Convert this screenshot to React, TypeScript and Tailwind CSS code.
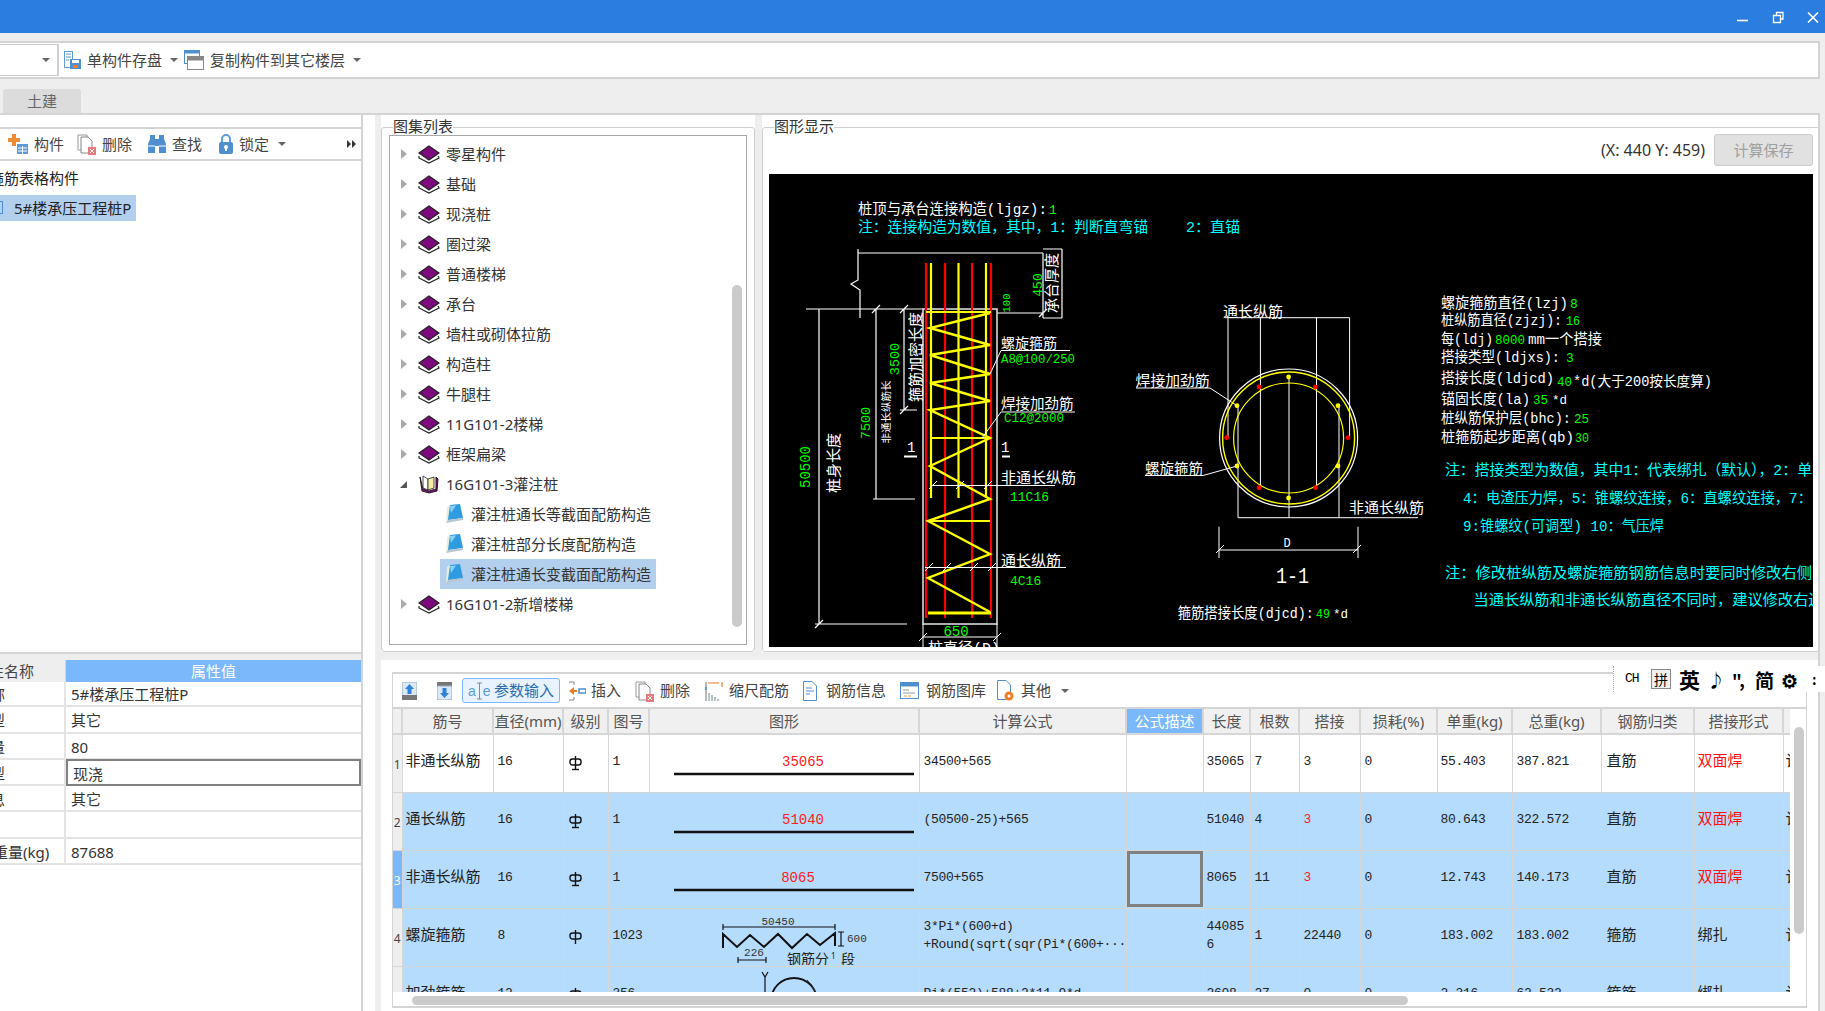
import React from 'react'

const treeItems = [
  { name: '零星构件' },
  { name: '基础' },
  { name: '现浇桩' },
  { name: '圈过梁' },
  { name: '普通楼梯' },
  { name: '承台' },
  { name: '墙柱或砌体拉筋' },
  { name: '构造柱' },
  { name: '牛腿柱' },
  { name: '11G101-2楼梯' },
  { name: '框架扁梁' },
]

const tableCols = [9, 91, 70, 45, 41, 270, 207, 77, 47, 49, 61, 77, 75, 89, 93, 89, 60]

const headers = ['', '筋号', '直径(mm)', '级别', '图号', '图形', '计算公式', '公式描述', '长度', '根数', '搭接', '损耗(%)', '单重(kg)', '总重(kg)', '钢筋归类', '搭接形式', '']

const rows = [
  { no: '1', name: '非通长纵筋', dia: '16', grade: 'b', fig: '1', len: '35065', formula: ['34500+565'], length: '35065', count: '7', lap: '3', lapRed: false, loss: '0', unit: '55.403', total: '387.821', kind: '直筋', form: '双面焊', formRed: true, blue: false },
  { no: '2', name: '通长纵筋', dia: '16', grade: 'b', fig: '1', len: '51040', formula: ['(50500-25)+565'], length: '51040', count: '4', lap: '3', lapRed: true, loss: '0', unit: '80.643', total: '322.572', kind: '直筋', form: '双面焊', formRed: true, blue: true },
  { no: '3', name: '非通长纵筋', dia: '16', grade: 'b', fig: '1', len: '8065', formula: ['7500+565'], length: '8065', count: '11', lap: '3', lapRed: true, loss: '0', unit: '12.743', total: '140.173', kind: '直筋', form: '双面焊', formRed: true, blue: true },
  { no: '4', name: '螺旋箍筋', dia: '8', grade: 'a', fig: '1023', len: '', formula: ['3*Pi*(600+d)', '+Round(sqrt(sqr(Pi*(600+···'], length: '440856', count: '1', lap: '22440', lapRed: false, loss: '0', unit: '183.002', total: '183.002', kind: '箍筋', form: '绑扎', formRed: false, blue: true },
  { no: '5', name: '加劲箍筋', dia: '12', grade: 'b', fig: '356', len: '', formula: ['Pi*(552)+588+2*11.9*d'], length: '2608', count: '27', lap: '0', lapRed: false, loss: '0', unit: '2.316', total: '62.532', kind: '箍筋', form: '绑扎', formRed: false, blue: true },
]

const props = [
  { label: '构件名称', value: '5#楼承压工程桩P', ml: '-ml-[55px]' },
  { label: '构件类型', value: '其它', ml: '-ml-[55px]' },
  { label: '构件数量', value: '80', ml: '-ml-[55px]' },
  { label: '预制类型', value: '现浇', ml: '-ml-[55px]', active: true },
  { label: '汇总信息', value: '其它', ml: '-ml-[55px]' },
  { label: '', value: '', ml: '' },
  { label: '钢筋总重量(kg)', value: '87688', ml: '-ml-[52px]' },
]

function Caret({ className }: { className?: string }) {
  return <span className={`block w-0 h-0 border-x-[4px] border-x-transparent border-t-[4px] border-t-[#666] ${className ?? ''}`} />
}

function BookIcon() {
  return (
    <svg width="22" height="20" viewBox="0 0 22 20" className="shrink-0">
      <path d="M1 12 L1 14 L11 19 L21 14 L20 12" fill="#fff" stroke="#222" strokeWidth="1.2" />
      <path d="M1 9 L11 2 L21 9 L11 16 Z" fill="#7d0a7d" stroke="#222" strokeWidth="1.2" />
    </svg>
  )
}

function OpenBookIcon() {
  return (
    <svg width="22" height="20" viewBox="0 0 22 20" className="shrink-0">
      <path d="M2 3 L4 17 L11 19 L19 17 L20 5 L18 3 L18 15 L11 17 L5 15 Z" fill="#7d0a7d" stroke="#222" strokeWidth="1" />
      <path d="M5 2 L10 5 L10 16 L5 14 Z" fill="#fff" stroke="#222" strokeWidth="0.8" />
      <path d="M10 5 L16 3 L16 14 L10 16 Z" fill="#f6eea0" stroke="#222" strokeWidth="0.8" />
    </svg>
  )
}

function SheetIcon() {
  return (
    <svg width="18" height="20" viewBox="0 0 18 20" className="shrink-0">
      <path d="M0 19 L1 3 L4 1 L4 16 Z" fill="#e4efdc" />
      <path d="M2 16 L4 1 L14 0 L17 14 Z" fill="#2f9be0" />
      <path d="M4 2 L10 1.5 L5 9 Z" fill="#8fd0f4" />
      <path d="M0 19 L2 16 L17 14 L17 16 Z" fill="#b8c6cf" />
    </svg>
  )
}

function GradeIcon({ kind }: { kind: string }) {
  return (
    <svg width="13" height="15" viewBox="0 0 13 15">
      <rect x="1" y="3" width="11" height="6" rx="2.5" fill="none" stroke="#111" strokeWidth="1.4" />
      <path d="M6.5 0 V14" stroke="#111" strokeWidth="1.4" />
      {kind === 'b' && <path d="M3 13.5 H10" stroke="#111" strokeWidth="1.4" />}
    </svg>
  )
}

function DocDeleteIcon() {
  return (
    <svg width="20" height="22" viewBox="0 0 20 22" className="shrink-0">
      <path d="M1 2 H10 V17 H1 Z" fill="#fff" stroke="#999" />
      <path d="M4 4 H11 L15 8 V20 H4 Z" fill="#fff" stroke="#888" />
      <rect x="11" y="14" width="8" height="8" fill="#e9797a" />
      <path d="M13 16 L17 20 M17 16 L13 20" stroke="#fff" strokeWidth="1" />
    </svg>
  )
}

function TopSaveIcon() {
  return (
    <svg width="17" height="18" viewBox="0 0 17 18" className="shrink-0">
      <rect x="0.5" y="0.5" width="8" height="16" fill="#fff" stroke="#5d9bd8" />
      <path d="M2 3 H7 M2 6 H7 M2 9 H5" stroke="#5d9bd8" />
      <rect x="6" y="8" width="11" height="10" fill="#4f8fd0" />
      <rect x="8" y="9" width="7" height="3" fill="#fff" />
      <rect x="9" y="14" width="5" height="3" fill="#ef7d22" />
    </svg>
  )
}

function TopCopyIcon() {
  return (
    <svg width="20" height="20" viewBox="0 0 20 20" className="shrink-0">
      <rect x="0.5" y="0.5" width="15" height="13" fill="#fff" stroke="#4f8fd0" />
      <rect x="0.5" y="0.5" width="15" height="3" fill="#4f8fd0" />
      <rect x="3.5" y="6.5" width="16" height="13" fill="#fff" stroke="#888" />
      <rect x="3.5" y="6.5" width="16" height="4" fill="#888" />
    </svg>
  )
}

function ToolbarTop() {
  return (
    <div className="flex items-center h-[38px] mt-[8px] mr-[5px] bg-white border-y-2 border-r-2 border-[#d4d4d4] text-[15px] text-[#444]">
      <div className="w-[59px] h-[32px] flex items-center justify-end pr-[7px] border-r-2 border-y border-[#cfcfcf]">
        <Caret />
      </div>
      <div className="ml-[5px]"><TopSaveIcon /></div>
      <span className="ml-[6px]">单构件存盘</span>
      <Caret className="ml-[8px]" />
      <div className="ml-[6px]"><TopCopyIcon /></div>
      <span className="ml-[6px]">复制构件到其它楼层</span>
      <Caret className="ml-[8px]" />
    </div>
  )
}

function LeftPanel() {
  return (
    <div className="w-[363px] h-full shrink-0 border-r-2 border-[#d4d4d4] flex flex-col pt-[12px]">
      <div className="h-[34px] shrink-0 flex items-center border-y-2 border-[#d4d4d4] text-[15px] text-[#444] relative">
        <svg width="20" height="22" viewBox="0 0 20 22" className="ml-[8px] shrink-0">
          <path d="M4 1 H8 V5 H12 V9 H8 V13 H4 V9 H0 V5 H4 Z" fill="#ef8a35" />
          <rect x="9" y="11" width="11" height="10" fill="#5d9bd8" />
          <path d="M10 15 H19 M10 18 H19 M14.5 13 V21" stroke="#fff" />
        </svg>
        <span className="ml-[6px]">构件</span>
        <div className="ml-[13px]"><DocDeleteIcon /></div>
        <span className="ml-[5px]">删除</span>
        <svg width="20" height="20" viewBox="0 0 20 20" className="ml-[15px] shrink-0">
          <path d="M3 1 H8 V5 H12 V1 H17 V5 L19 10 V19 H12 V12 H8 V19 H1 V10 L3 5 Z" fill="#4f8fd0" />
          <path d="M1 12 H8 M12 12 H19" stroke="#fff" />
        </svg>
        <span className="ml-[5px]">查找</span>
        <svg width="16" height="20" viewBox="0 0 16 20" className="ml-[16px] shrink-0">
          <path d="M4 8 V5 A4 4 0 0 1 12 5 V8" fill="none" stroke="#5d9bd8" strokeWidth="2" />
          <rect x="1" y="8" width="14" height="12" rx="2" fill="#4f8fd0" />
          <circle cx="8" cy="13" r="2" fill="#fff" />
          <rect x="7" y="13" width="2" height="4" fill="#fff" />
        </svg>
        <span className="ml-[5px]">锁定</span>
        <Caret className="ml-[9px]" />
        <svg width="10" height="8" viewBox="0 0 10 8" className="absolute right-[4px] top-[11px]">
          <path d="M0 0 L4 4 L0 8 Z M5 0 L9 4 L5 8 Z" fill="#333" />
        </svg>
      </div>
      <div className="h-[491px] shrink-0 text-[15px] text-[#222] overflow-hidden">
        <div className="h-[34px] flex items-center -ml-[11px] whitespace-nowrap">箍筋表格构件</div>
        <div className="w-[136px] h-[26px] bg-[#b3cfee] flex items-center pl-[14px] whitespace-nowrap relative">
          <span className="absolute left-0 top-[6px] w-[3px] h-[13px] border-y border-r border-[#4f8fd0]" />
          5#楼承压工程桩P
        </div>
      </div>
      <div className="h-[8px] shrink-0 bg-[#eeeeee] border-t-2 border-[#d4d4d4]" />
      <div className="text-[15px] text-[#333]">
        <div className="grid grid-cols-[66px_1fr] h-[21px] border-b border-[#cfcfcf]">
          <div className="bg-[#eeeeee] overflow-hidden whitespace-nowrap text-[#444] leading-[22px] border-r border-[#d4d4d4]">
            <span className="block -ml-[26px]">属性名称</span>
          </div>
          <div className="bg-[#7ab8fb] text-white text-center leading-[22px]">属性值</div>
        </div>
        {props.map((p, i) => (
          <div key={i} className="grid grid-cols-[66px_1fr] h-[26.3px] border-b-2 border-[#e4e4e4]">
            <div className="overflow-hidden whitespace-nowrap leading-[26px] border-r-2 border-[#e4e4e4]">
              <span className={`block ${p.ml}`}>{p.label}</span>
            </div>
            <div className={`pl-[5px] leading-[26px] ${p.active ? 'border-2 border-[#808080] -mt-[1px] h-[27px] pl-[3px]' : ''}`}>{p.value}</div>
          </div>
        ))}
      </div>
    </div>
  )
}

function TreePanel() {
  return (
    <div className="w-[374px] shrink-0 mt-[12px] h-[525px] relative border border-[#cfcfcf] rounded-[3px] pt-[7px] px-[7px] pb-[6px]">
      <span className="absolute left-[11px] -top-[11px] bg-white text-[15px] leading-[18px] text-[#333]">图集列表</span>
      <div className="h-full border border-[#a8a8a8] relative pt-[3px] text-[15px] text-[#333] overflow-hidden">
        {treeItems.map(item => (
          <div key={item.name} className="h-[30px] flex items-center pl-[11px]">
            <span className="block w-0 h-0 border-y-[5px] border-y-transparent border-l-[6px] border-l-[#aaa] mr-[11px]" />
            <BookIcon />
            <span className="ml-[6px]">{item.name}</span>
          </div>
        ))}
        <div className="h-[30px] flex items-center pl-[10px]">
          <span className="block w-0 h-0 border-b-[7px] border-b-[#555] border-l-[7px] border-l-transparent mr-[11px]" />
          <OpenBookIcon />
          <span className="ml-[6px]">16G101-3灌注桩</span>
        </div>
        <div className="h-[30px] flex items-center pl-[56px]">
          <SheetIcon />
          <span className="ml-[7px]">灌注桩通长等截面配筋构造</span>
        </div>
        <div className="h-[30px] flex items-center pl-[56px]">
          <SheetIcon />
          <span className="ml-[7px]">灌注桩部分长度配筋构造</span>
        </div>
        <div className="h-[30px] flex items-center ml-[50px] pl-[6px] w-[216px] bg-[#b3cfee]">
          <SheetIcon />
          <span className="ml-[7px]">灌注桩通长变截面配筋构造</span>
        </div>
        <div className="h-[30px] flex items-center pl-[11px]">
          <span className="block w-0 h-0 border-y-[5px] border-y-transparent border-l-[6px] border-l-[#aaa] mr-[11px]" />
          <BookIcon />
          <span className="ml-[6px]">16G101-2新增楼梯</span>
        </div>
        <div className="absolute right-[4px] top-[149px] w-[10px] h-[342px] rounded-[5px] bg-[#cbcbcb]" />
      </div>
    </div>
  )
}

const W = '#ffffff'
const G = '#00ff00'
const C = '#00ffff'
const Y = '#ffff00'
const R = '#ff0000'

function T({ x, y, c = W, s = 14.5, children, a, rot, len }: { x: number; y: number; c?: string; s?: number; children: React.ReactNode; a?: 'middle'; rot?: boolean; len?: number }) {
  return (
    <text x={x} y={y} fill={c} fontSize={s} textAnchor={a} textLength={len} lengthAdjust={len ? 'spacingAndGlyphs' : undefined} transform={rot ? `rotate(-90 ${x} ${y})` : undefined} fontFamily="'Liberation Mono','Noto Sans CJK SC',monospace">
      {children}
    </text>
  )
}

function CadDrawing() {
  const zig = '990,313 930,328 990,345 930,355 990,374 930,383 990,401 930,410 990,438 930,466 990,499 928,521 990,554 928,578 990,612'
  const tick = (x: number, y: number) => `M${x - 4} ${y + 4} L${x + 4} ${y - 4} `
  return (
    <svg viewBox="769 174 1044 473" className="block w-[1044px] h-[473px] bg-black">
      {/* elevation */}
      <T x={858} y={214} s={15} len={189}>桩顶与承台连接构造(ljgz):</T>
      <T x={1049} y={214} c={G} s={13}>1</T>
      <T x={858} y={232} c={C} s={15} len={290}>注：连接构造为数值，其中，1：判断直弯锚</T>
      <T x={1186} y={232} c={C} s={15} len={54}>2：直锚</T>

      <path d={`M858 249 V280 L851 284 L860 290 V318 M858 253 H1043 M806 309 H923 M997 313 H1043 M1062 249 V318 M1043 253 V318 M1043 249 H1062 M1043 318 H1062 M819 309 V624 M815 624 H907 M876 309 V499 M873 499 H915 M904 309 V410 M900 410 H917 ${tick(819, 624)}${tick(876, 309)}${tick(904, 309)}${tick(904, 410)}${tick(1043, 313)}`} fill="none" stroke={W} strokeWidth="1.2" />
      <rect x={923} y={309} width={74} height={315} fill="none" stroke="#e8e8e8" strokeWidth="1.5" />
      <path d="M926 263 V618 M945 263 V618 M972 263 V618 M991 263 V618" stroke={R} strokeWidth="2.2" />
      <path d="M931 263 V498 M958.5 263 V498 M986 263 V498" stroke={Y} strokeWidth="2.2" />
      <polyline points={zig} fill="none" stroke={Y} strokeWidth="2.4" />
      <path d="M926 312 H991 M930 438 H990 M928 521 H990" stroke={Y} strokeWidth="2.2" />
      <path d="M928 613 H991" stroke={Y} strokeWidth="3.2" />

      <T x={810} y={467} c={G} a="middle" rot s={14}>50500</T>
      <T x={839} y={463} a="middle" rot s={15}>桩身长度</T>
      <T x={870} y={423} c={G} a="middle" rot s={13.5}>7500</T>
      <T x={890} y={412} a="middle" rot s={10.5}>非通长纵筋长</T>
      <T x={899} y={359} c={G} a="middle" rot s={13.5}>3500</T>
      <T x={921} y={357} a="middle" rot s={15}>箍筋加密长度</T>
      <T x={1057} y={283} a="middle" rot s={15}>承台厚度</T>
      <T x={1042} y={285} c={G} a="middle" rot s={13}>450</T>
      <T x={1010} y={303} c={G} a="middle" rot s={10.5}>100</T>

      <T x={1001} y={348} s={14}>螺旋箍筋</T>
      <path d="M1001 350.5 H1070 L1001 350.5 L990 374" fill="none" stroke={W} />
      <T x={1001} y={363} c={G} s={13} len={74}>A8@100/250</T>
      <T x={1001} y={409} s={14.5}>焊接加劲筋</T>
      <path d="M1075 412 H1001 L982 438" fill="none" stroke={W} />
      <T x={1004} y={422} c={G} s={13} len={60}>C12@2000</T>
      <T x={1001} y={483} s={15}>非通长纵筋</T>
      <path d={`M931 485.5 H1055 ${tick(933, 485)}${tick(960, 485)}${tick(988, 485)}`} fill="none" stroke={W} />
      <T x={1010} y={501} c={G} s={13}>11C16</T>
      <T x={1001} y={566} s={15}>通长纵筋</T>
      <path d={`M925 567.5 H1066 ${tick(929, 567)}${tick(947, 567)}${tick(974, 567)}${tick(992, 567)}`} fill="none" stroke={W} />
      <T x={1010} y={585} c={G} s={13}>4C16</T>

      <T x={907} y={452} s={14}>1</T>
      <path d="M904 456.5 H917 M1002 456.5 H1010" stroke={W} strokeWidth="2" />
      <T x={1001} y={452} s={14}>1</T>

      <T x={956} y={636} c={G} a="middle" s={14}>650</T>
      <path d={`M923 637 H997 ${tick(923, 637)}${tick(997, 637)}M923 624 V647 M997 624 V647`} fill="none" stroke={W} />
      <T x={928} y={653} s={15}>桩直径(D)</T>

      {/* section 1-1 */}
      <path d="M1225 317.7 H1349.6 M1228 317.7 V437 M1260.4 317.7 V487 M1316.5 317.7 V487 M1349.6 317.7 V437 M1238 405 V517.7 M1289 377 V517.7 M1339 405 V517.7 M1238 517.7 H1418 M1136 388 H1210 L1236 405 M1145 475.5 H1203 L1237 466" fill="none" stroke={W} strokeWidth="1" />
      <circle cx={1288.6} cy={438} r={69} fill="none" stroke={W} strokeWidth="1.2" />
      <circle cx={1288.6} cy={438} r={66} fill="none" stroke={Y} strokeWidth="1.4" />
      <circle cx={1288.6} cy={438} r={55} fill="none" stroke={Y} strokeWidth="1.2" />
      {[[1288.6, 377], [1288.6, 498], [1237, 405.7], [1338, 405.7], [1237, 466], [1338, 466]].map(p => (
        <circle key={`${p[0]}-${p[1]}`} cx={p[0]} cy={p[1]} r={2.4} fill={Y} />
      ))}
      {[[1259, 387], [1315.4, 387], [1226.7, 437.7], [1348, 437.7], [1259, 487.7], [1315.4, 487.7]].map(p => (
        <circle key={`${p[0]}-${p[1]}`} cx={p[0]} cy={p[1]} r={2.4} fill={R} />
      ))}
      <T x={1223} y={316.7} s={15}>通长纵筋</T>
      <T x={1135.6} y={386} s={15} len={74}>焊接加劲筋</T>
      <T x={1145} y={474} s={14.5}>螺旋箍筋</T>
      <T x={1349} y={512.7} s={14.5} len={75}>非通长纵筋</T>
      <path d={`M1219 526.7 V558 M1358 526.7 V558 M1219 550 H1358 ${tick(1220, 549)}${tick(1357, 549)}`} fill="none" stroke={W} />
      <T x={1287} y={546.7} a="middle" s={12}>D</T>
      <T x={1276} y={583} s={22} len={33}>1-1</T>
      <T x={1177.7} y={618.3} s={14.5} len={136}>箍筋搭接长度(djcd):</T>
      <T x={1316} y={618.3} c={G} s={13} len={14}>49</T>
      <T x={1333} y={618.3} s={13} len={15}>*d</T>

      {/* params */}
      <T x={1441} y={307.7} s={14.5} len={127}>螺旋箍筋直径(lzj)</T>
      <T x={1570} y={307.7} c={G} s={13}>8</T>
      <T x={1441} y={325.3} s={14.5} len={121}>桩纵筋直径(zjzj):</T>
      <T x={1566} y={325.3} c={G} s={13} len={14}>16</T>
      <T x={1441} y={344} s={14.5} len={52}>每(ldj)</T>
      <T x={1495} y={344} c={G} s={13} len={30}>8000</T>
      <T x={1528} y={344} s={14.5} len={74}>mm一个搭接</T>
      <T x={1441} y={361.7} s={14.5} len={119}>搭接类型(ldjxs):</T>
      <T x={1566} y={361.7} c={G} s={13}>3</T>
      <T x={1441} y={383} s={14.5} len={113}>搭接长度(ldjcd)</T>
      <T x={1557} y={385.7} c={G} s={13} len={15}>40</T>
      <T x={1573} y={385.7} s={14} len={139}>*d(大于200按长度算)</T>
      <T x={1441} y={404} s={14.5} len={89}>锚固长度(la)</T>
      <T x={1533} y={404} c={G} s={13} len={15}>35</T>
      <T x={1552} y={404} s={13} len={15}>*d</T>
      <T x={1441} y={423} s={14.5} len={130}>桩纵筋保护层(bhc):</T>
      <T x={1574} y={423} c={G} s={13} len={15}>25</T>
      <T x={1441} y={441.7} s={14.5} len={133}>桩箍筋起步距离(qb)</T>
      <T x={1575} y={441.7} c={G} s={13} len={14}>30</T>

      <T x={1445} y={475} c={C} s={15} len={367}>注：搭接类型为数值，其中1：代表绑扎（默认），2：单</T>
      <T x={1463} y={502.7} c={C} s={15} len={349}>4：电渣压力焊，5：锥螺纹连接，6：直螺纹连接，7：</T>
      <T x={1463} y={530.7} c={C} s={15} len={201}>9:锥螺纹(可调型) 10：气压焊</T>
      <T x={1445} y={578} c={C} s={15} len={367}>注：修改桩纵筋及螺旋箍筋钢筋信息时要同时修改右侧</T>
      <T x={1473.5} y={605} c={C} s={15} len={350}>当通长纵筋和非通长纵筋直径不同时，建议修改右边</T>
    </svg>
  )
}

function DrawingPanel() {
  return (
    <div className="w-[1058px] shrink-0 mt-[12px] h-[525px] relative border border-[#cfcfcf] rounded-[3px] px-[6px] pt-[6px]">
      <span className="absolute left-[11px] -top-[11px] bg-white text-[15px] leading-[18px] text-[#333]">图形显示</span>
      <div className="h-[32px] flex items-center justify-end gap-[9px] text-[16px] text-[#333]">
        <span>(X: 440 Y: 459)</span>
        <button className="w-[99px] h-[32px] bg-[#e1e1e1] border border-[#cccccc] rounded-[3px] text-[#a0a0a0] text-[15px]">计算保存</button>
      </div>
      <div className="mt-[8px]"><CadDrawing /></div>
    </div>
  )
}

function ToolbarBottom() {
  return (
    <div className="h-[35px] shrink-0 flex items-center border-b-2 border-[#d4d4d4] text-[15px] text-[#444]">
      <svg width="15" height="18" viewBox="0 0 15 18" className="ml-[9px] shrink-0">
        <rect width="15" height="14" fill="#dbe9f7" stroke="#9ab" />
        <rect y="13" width="15" height="5" fill="#777" />
        <path d="M7.5 2 L12 7 H9.5 V12 H5.5 V7 H3 Z" fill="#2f83d6" />
      </svg>
      <svg width="15" height="18" viewBox="0 0 15 18" className="ml-[20px] shrink-0">
        <rect width="15" height="5" fill="#777" />
        <rect y="4" width="15" height="14" fill="#dbe9f7" stroke="#9ab" />
        <path d="M7.5 16 L12 11 H9.5 V6 H5.5 V11 H3 Z" fill="#2f83d6" />
      </svg>
      <div className="ml-[10px] w-[98px] h-[25px] flex items-center bg-[#e8f3ff] border border-[#7ab8fb] rounded-[3px] pl-[5px] text-[#2b6cb0]">
        <span className="flex items-center w-[26px] shrink-0 text-[14px] leading-none text-[#5d9bd8] font-['Liberation_Sans',sans-serif]">
          a
          <svg width="7" height="18" viewBox="0 0 7 18" className="shrink-0">
            <path d="M1 1 H6 M3.5 1 V17 M1 17 H6" stroke="#8a8a8a" fill="none" />
          </svg>
          e
        </span>
        <span className="whitespace-nowrap">参数输入</span>
      </div>
      <svg width="18" height="20" viewBox="0 0 18 20" className="ml-[8px] shrink-0">
        <path d="M1 1 H6 V4 M1 19 H6 V16" fill="none" stroke="#888" />
        <path d="M1 10 L6 6 V14 Z M5 9 H9 V11 H5 Z" fill="#ef7d22" />
        <rect x="11" y="8" width="7" height="4" fill="none" stroke="#4f8fd0" strokeWidth="1.5" />
      </svg>
      <span className="ml-[5px]">插入</span>
      <div className="ml-[14px]"><DocDeleteIcon /></div>
      <span className="ml-[5px]">删除</span>
      <svg width="18" height="20" viewBox="0 0 18 20" className="ml-[15px] shrink-0">
        <path d="M1 1 V20" stroke="#888" strokeWidth="1.2" />
        <path d="M3 2 H14 M17 1 V6" stroke="#ef7d22" strokeWidth="1.2" />
        <path d="M4 12 V20 M7 14 V20 M10 16 V20 M13 18 V20" stroke="#9aa" strokeWidth="1.4" />
        <path d="M1 6 V9" stroke="#4f8fd0" strokeWidth="1.6" />
      </svg>
      <span className="ml-[6px]">缩尺配筋</span>
      <svg width="14" height="20" viewBox="0 0 14 20" className="ml-[14px] shrink-0">
        <path d="M0.5 0.5 H9 L13.5 5 V19.5 H0.5 Z" fill="#fff" stroke="#4f8fd0" />
        <path d="M3 7 H9 M3 10 H11 M3 13 H7" stroke="#4f8fd0" />
      </svg>
      <span className="ml-[9px]">钢筋信息</span>
      <svg width="19" height="17" viewBox="0 0 19 17" className="ml-[14px] shrink-0">
        <rect x="0.5" y="0.5" width="18" height="16" fill="#fff" stroke="#4f8fd0" />
        <rect x="0.5" y="0.5" width="18" height="4" fill="#4f8fd0" />
        <path d="M3 8 H9 M3 11 H15" stroke="#999" strokeWidth="1.2" />
        <path d="M4 14 H7 M8 14 H11" stroke="#ef9d42" strokeWidth="1.2" />
      </svg>
      <span className="ml-[7px]">钢筋图库</span>
      <svg width="18" height="22" viewBox="0 0 18 22" className="ml-[11px] shrink-0">
        <path d="M0.5 0.5 H9 L13.5 5 V19.5 H0.5 Z" fill="#fff" stroke="#4f8fd0" />
        <circle cx="12" cy="16" r="4.5" fill="#ef7d22" />
        <circle cx="12" cy="16" r="1.6" fill="#fff" />
      </svg>
      <span className="ml-[6px]">其他</span>
      <Caret className="ml-[10px]" />
    </div>
  )
}

function ShapeCell({ r }: { r: (typeof rows)[number] }) {
  if (r.len) {
    const cx = r.no === '3' ? 148 : 153
    return (
      <svg viewBox="0 0 270 56" className="block w-[270px] h-[56px]">
        <text x={cx} y={31} fill="#ff2020" fontSize="14" textAnchor="middle" fontFamily="'Liberation Mono',monospace">{r.len}</text>
        <path d="M24 39 H264" stroke="#111" strokeWidth="2.6" />
      </svg>
    )
  }
  if (r.no === '4') {
    return (
      <svg viewBox="0 0 270 56" className="block w-[270px] h-[56px]">
        <polyline points="73,39 73,25 87,38 100,26 114,38 128,25 142,39 157,25 170,36 185,24 185,37" fill="none" stroke="#111" strokeWidth="2" />
        <path d="M73 18 H185 M73 15 V21 M185 15 V21 M191 23 V37 M188 23 H194 M188 37 H194 M88 51 H116 M88 48 V54 M116 48 V54" stroke="#111" strokeWidth="1.2" fill="none" />
        <g fontFamily="'Liberation Mono',monospace" fontSize="11" fill="#333">
          <text x={128} y={16} textAnchor="middle">50450</text>
          <text x={197} y={33}>600</text>
          <text x={104} y={47} textAnchor="middle">226</text>
        </g>
        <text x={137} y={55} fontSize="14" fill="#222" fontFamily="'Noto Sans CJK SC',sans-serif">钢筋分</text>
        <text x={181} y={50} fontSize="8" fill="#222">1</text>
        <text x={191} y={55} fontSize="14" fill="#222" fontFamily="'Noto Sans CJK SC',sans-serif">段</text>
      </svg>
    )
  }
  return (
    <svg viewBox="0 0 270 56" className="block w-[270px] h-[56px]">
      <path d="M115 9 V40 M112 5 L115 10 L118 5" stroke="#111" strokeWidth="1.2" fill="none" />
      <circle cx="144" cy="34" r="23" fill="none" stroke="#111" strokeWidth="1.8" />
      <path d="M157 13 Q168 22 167 40" stroke="#333" fill="none" />
    </svg>
  )
}

function RebarTable() {
  const cell = 'border-r border-b border-[#d6d6d6] align-top p-0 overflow-hidden'
  const mono = "font-['Liberation_Mono','Noto_Sans_CJK_SC',monospace] text-[13px] tracking-[-0.3px]"
  return (
    <div className="relative flex-1 min-h-0">
      <div className="w-[1397px] h-[283px] overflow-hidden">
        <table className="table-fixed border-collapse w-[1450px] text-[15px] text-[#222]">
          <colgroup>
            {tableCols.map((w, i) => <col key={i} style={{ width: w }} />)}
          </colgroup>
          <thead>
            <tr className="h-[25px] bg-[#f0f0f0] text-[#555]">
              {headers.map((h, i) => (
                <th key={i} className={`font-normal p-0 leading-[23px] border-r-2 border-b-2 border-[#d6d6d6] whitespace-nowrap ${h === '公式描述' ? 'bg-[#7ab8fb] text-white' : ''}`}>{h}</th>
              ))}
            </tr>
          </thead>
          <tbody>
            {rows.map(r => (
              <tr key={r.no} className={`h-[57.5px] ${r.blue ? 'bg-[#b6dcfd]' : 'bg-white'}`}>
                <td className={`${cell} text-center text-[12px] leading-[54px] pt-[3px] ${r.no === '3' ? 'bg-[#7ab8fb] text-white' : 'bg-[#eeeeee] text-[#444]'}`}>{r.no}</td>
                <td className={`${cell} pl-[3px] leading-[50px] whitespace-nowrap`}>{r.name}</td>
                <td className={`${cell} pl-[4px] leading-[54px] ${mono}`}>{r.dia}</td>
                <td className={`${cell} pl-[5px] pt-[21px]`}><GradeIcon kind={r.grade} /></td>
                <td className={`${cell} pl-[4px] leading-[54px] ${mono}`}>{r.fig}</td>
                <td className={cell}><ShapeCell r={r} /></td>
                <td className={`${cell} pl-[4px] ${mono} whitespace-nowrap ${r.formula.length > 1 ? 'pt-[9px] leading-[18px]' : 'leading-[54px]'}`}>
                  {r.formula.map(f => <div key={f}>{f}</div>)}
                </td>
                <td className={cell}>
                  {r.no === '3' && <div className="h-[56px] border-[3px] border-[#808080]" />}
                </td>
                <td className={`${cell} pl-[3px] ${mono} break-all ${r.length.length > 5 ? 'pt-[9px] leading-[18px]' : 'leading-[54px]'}`}>{r.length}</td>
                <td className={`${cell} pl-[4px] leading-[54px] ${mono}`}>{r.count}</td>
                <td className={`${cell} pl-[4px] leading-[54px] ${mono} ${r.lapRed ? 'text-[#ff2020]' : ''}`}>{r.lap}</td>
                <td className={`${cell} pl-[4px] leading-[54px] ${mono}`}>{r.loss}</td>
                <td className={`${cell} pl-[3px] leading-[54px] ${mono}`}>{r.unit}</td>
                <td className={`${cell} pl-[4px] leading-[54px] ${mono}`}>{r.total}</td>
                <td className={`${cell} pl-[5px] leading-[50px]`}>{r.kind}</td>
                <td className={`${cell} pl-[3px] leading-[50px] ${r.formRed ? 'text-[#ff1010]' : ''}`}>{r.form}</td>
                <td className={`${cell} pl-[2px] leading-[50px]`}>计</td>
              </tr>
            ))}
          </tbody>
        </table>
      </div>
      <div className="absolute left-[19px] top-[287px] w-[996px] h-[9px] rounded-[5px] bg-[#cbcbcb]" />
      <div className="absolute left-[1401px] top-[18px] w-[10px] h-[207px] rounded-[5px] bg-[#cbcbcb]" />
    </div>
  )
}

function ImeBar() {
  return (
    <div className="absolute left-[1613px] top-[666px] w-[212px] h-[26px] bg-white border-l border-dotted border-[#aaa] flex items-center pl-[11px] text-black font-bold font-['Noto_Sans_CJK_SC',sans-serif]">
      <span className="font-['Liberation_Mono',monospace] font-normal text-[13px] w-[16px] tracking-[-1px]">CH</span>
      <span className="ml-[10px] w-[20px] h-[20px] border border-[#888] bg-[#f0f0f0] text-[14px] font-normal leading-[18px] text-center">拼</span>
      <span className="ml-[8px] text-[21px] leading-none">英</span>
      <span className="ml-[7px] w-[18px] text-[18px] leading-none">♪</span>
      <span className="ml-[7px] w-[16px] text-[17px] leading-none">&quot;,</span>
      <span className="ml-[7px] text-[19px] leading-none">简</span>
      <span className="ml-[7px] text-[19px] leading-none">⚙</span>
      <span className="ml-[14px] text-[14px] leading-none">:</span>
    </div>
  )
}

export default function App() {
  return (
    <div className="relative w-[1825px] h-[1011px] overflow-hidden bg-[#eeeeee] flex flex-col font-['Noto_Sans','Noto_Sans_CJK_SC',sans-serif]">
      <div className="h-[33px] shrink-0 bg-[#2b7de0] flex items-start justify-end text-white">
        <svg width="88" height="33" viewBox="0 0 88 33">
          <path d="M0 20.5 H11" stroke="#fff" strokeWidth="1.6" />
          <path d="M36.5 15.5 H43.5 V22.5 H36.5 Z M39.5 15 V12.5 H46 V19 H43.5" fill="none" stroke="#fff" strokeWidth="1.3" />
          <path d="M71 12.5 L81 22.5 M81 12.5 L71 22.5" stroke="#fff" strokeWidth="1.6" />
        </svg>
      </div>
      <ToolbarTop />
      <div className="h-[34px] shrink-0 pl-[3px] pt-[10px] mr-[5px]">
        <div className="w-[78px] h-[24px] bg-[#dcdcdc] rounded-t-[3px] text-center text-[15px] leading-[24px] text-[#666]">土建</div>
      </div>
      <div className="flex-1 min-h-0 flex mr-[5px] bg-white border-t-2 border-r-2 border-[#d4d4d4]">
        <LeftPanel />
        <div className="w-[12px] shrink-0" />
        <div className="w-[6px] shrink-0 bg-[#eeeeee]" />
        <div className="flex-1 min-w-0 flex flex-col">
          <div className="h-[537px] shrink-0 flex">
            <TreePanel />
            <div className="w-[7px] shrink-0 bg-[#eeeeee]" />
            <DrawingPanel />
          </div>
          <div className="h-[8px] shrink-0 bg-[#eeeeee]" />
          <div className="flex-1 min-h-0 pt-[12px] pl-[11px] pr-[11px] pb-[3px]">
            <div className="h-full flex flex-col border-y-2 border-x border-[#d4d4d4]">
              <ToolbarBottom />
              <RebarTable />
            </div>
          </div>
        </div>
      </div>
      <ImeBar />
    </div>
  )
}
